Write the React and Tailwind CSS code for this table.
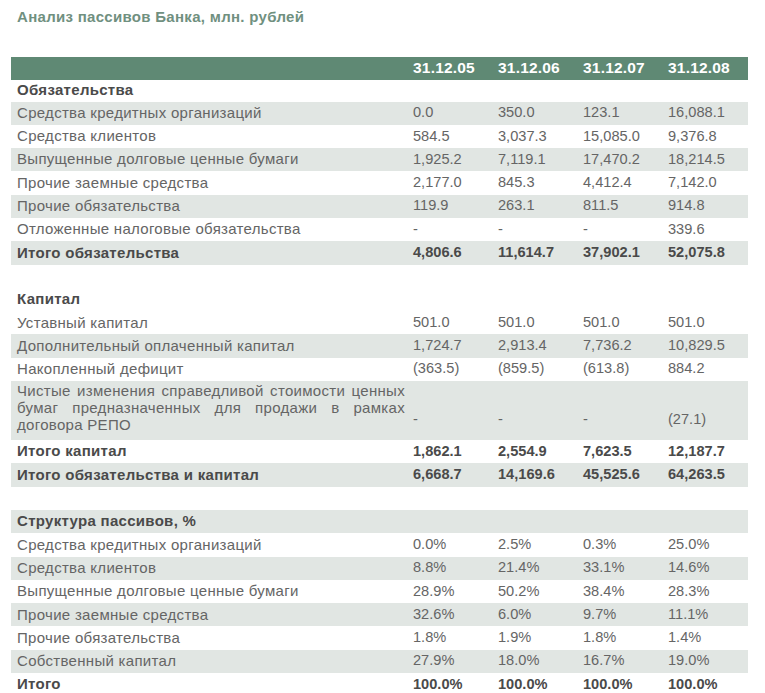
const liabilities = [
  { label: "Средства кредитных организаций", values: ["0.0", "350.0", "123.1", "16,088.1"] },
  { label: "Средства клиентов", values: ["584.5", "3,037.3", "15,085.0", "9,376.8"] },
  { label: "Выпущенные долговые ценные бумаги", values: ["1,925.2", "7,119.1", "17,470.2", "18,214.5"] },
  { label: "Прочие заемные средства", values: ["2,177.0", "845.3", "4,412.4", "7,142.0"] },
  { label: "Прочие обязательства", values: ["119.9", "263.1", "811.5", "914.8"] },
  { label: "Отложенные налоговые обязательства", values: ["-", "-", "-", "339.6"] },
];

const capital = [
  { label: "Уставный капитал", values: ["501.0", "501.0", "501.0", "501.0"] },
  { label: "Дополнительный оплаченный капитал", values: ["1,724.7", "2,913.4", "7,736.2", "10,829.5"] },
  { label: "Накопленный дефицит", values: ["(363.5)", "(859.5)", "(613.8)", "884.2"] },
];

const structure = [
  { label: "Средства кредитных организаций", values: ["0.0%", "2.5%", "0.3%", "25.0%"] },
  { label: "Средства клиентов", values: ["8.8%", "21.4%", "33.1%", "14.6%"] },
  { label: "Выпущенные долговые ценные бумаги", values: ["28.9%", "50.2%", "38.4%", "28.3%"] },
  { label: "Прочие заемные средства", values: ["32.6%", "6.0%", "9.7%", "11.1%"] },
  { label: "Прочие обязательства", values: ["1.8%", "1.9%", "1.8%", "1.4%"] },
  { label: "Собственный капитал", values: ["27.9%", "18.0%", "16.7%", "19.0%"] },
];

const Row = ({ label, values = [], shaded, bold }) => (
  <div
    className={`flex h-[23.3px] items-center ${shaded ? "bg-[#e1e6e3]" : ""} ${
      bold ? "font-bold text-[#4a4a4a]" : "text-[#656565]"
    }`}
  >
    <div className="w-[397px] pl-[6px] text-[15px] tracking-[0.3px]">{label}</div>
    {values.map((v, i) => (
      <div key={i} className="w-[85px] pl-[5px] text-[14.6px]">
        {v}
      </div>
    ))}
  </div>
);

const Spacer = () => <div className="h-[23.3px]" />;

export default function App() {
  return (
    <div
      className="min-h-screen bg-white"
      style={{ fontFamily: '"Liberation Sans", Arial, sans-serif' }}
    >
      <div className="pt-[6px] pl-[17px]">
        <h1 className="text-[15px] font-bold tracking-[0.3px] text-[#70907f]">
          Анализ пассивов Банка, млн. рублей
        </h1>
      </div>

      <div className="mt-[28px] ml-[11px] w-[737px]">
        {/* Header */}
        <div className="flex h-[23px] items-center bg-[#5f8974] font-bold text-white text-[15.5px] tracking-[0.2px]">
          <div className="w-[397px]"></div>
          {["31.12.05", "31.12.06", "31.12.07", "31.12.08"].map((d) => (
            <div key={d} className="w-[85px] pl-[5px]">
              {d}
            </div>
          ))}
        </div>

        {/* Liabilities */}
        <div className="flex h-[22px] items-center font-bold text-[#4a4a4a] text-[15px] tracking-[0.3px]">
          <div className="pl-[6px]">Обязательства</div>
        </div>
        {liabilities.map((r, i) => (
          <Row key={r.label} {...r} shaded={i % 2 === 0} />
        ))}
        <Row label="Итого обязательства" values={["4,806.6", "11,614.7", "37,902.1", "52,075.8"]} shaded bold />

        <Spacer />

        {/* Capital */}
        <Row label="Капитал" bold />
        {capital.map((r, i) => (
          <Row key={r.label} {...r} shaded={i % 2 === 1} />
        ))}
        <div className="flex h-[59px] bg-[#e1e6e3] text-[#656565]">
          <div className="w-[397px] pl-[6px] pr-[3px] pt-[1px] text-justify text-[15px] tracking-[0.3px] leading-[17px]">
            Чистые изменения справедливой стоимости ценных бумаг предназначенных для продажи в рамках договора РЕПО
          </div>
          {["-", "-", "-", "(27.1)"].map((v, i) => (
            <div key={i} className="w-[85px] pl-[5px] pt-[28px] text-[14.6px]">
              {v}
            </div>
          ))}
        </div>
        <Row label="Итого капитал" values={["1,862.1", "2,554.9", "7,623.5", "12,187.7"]} bold />
        <Row label="Итого обязательства и капитал" values={["6,668.7", "14,169.6", "45,525.6", "64,263.5"]} shaded bold />

        <Spacer />

        {/* Structure */}
        <Row label="Структура пассивов, %" shaded bold />
        {structure.map((r, i) => (
          <Row key={r.label} {...r} shaded={i % 2 === 1} />
        ))}
        <Row label="Итого" values={["100.0%", "100.0%", "100.0%", "100.0%"]} bold />
      </div>
    </div>
  );
}
